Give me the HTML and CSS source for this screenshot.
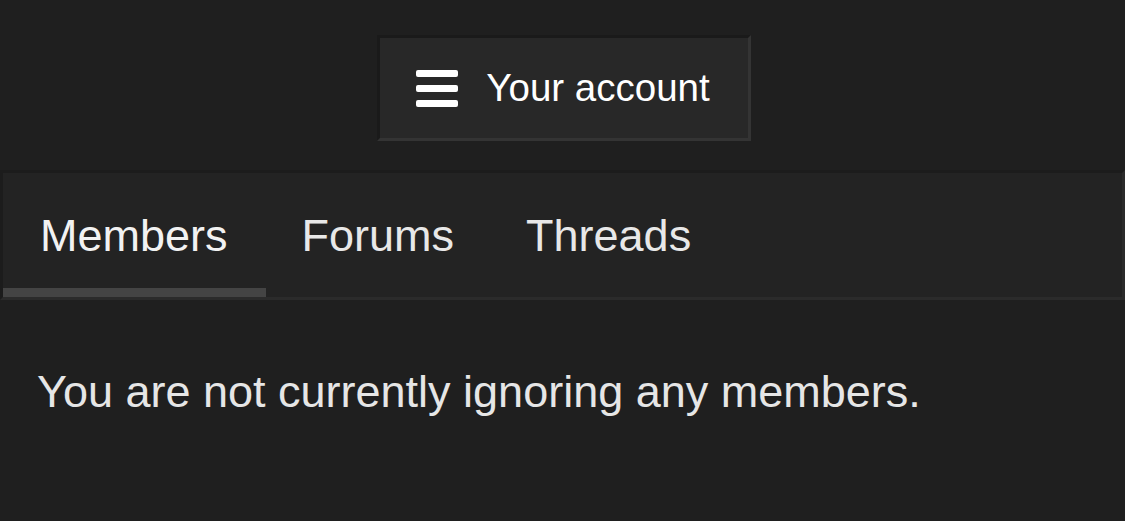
FILE: index.html
```html
<!DOCTYPE html>
<html lang="en">
  <head>
    <meta charset="UTF-8" />
    <meta name="viewport" content="width=device-width, initial-scale=1.0" />
    <title>Ignored members</title>
    <link rel="stylesheet" href="styles.css">
  </head>
  <body>
    <div class="account-bar">
      <button class="account-button">
        <svg class="menu-icon" width="42" height="37" viewBox="0 0 42 37">
          <rect x="0" y="0" width="42" height="7" rx="2" />
          <rect x="0" y="15" width="42" height="7" rx="2" />
          <rect x="0" y="30" width="42" height="7" rx="2" />
        </svg>
        <span>Your account</span>
      </button>
    </div>

    <div class="tabs">
      <a class="tab active" href="#">Members</a>
      <a class="tab" href="#">Forums</a>
      <a class="tab" href="#">Threads</a>
    </div>

    <p class="empty-message">You are not currently ignoring any members.</p>
  </body>
</html>
```

FILE: styles.css
```css
body {
  font-family: "Liberation Sans", Arial, sans-serif;
  margin: 0;
  padding: 0;
  background: #1f1f1f;
  color: #e8e8e8;
}

.account-bar {
  display: flex;
  justify-content: center;
  padding-top: 35px;
}

.account-button {
  display: flex;
  align-items: center;
  gap: 28px;
  margin-left: 3px;
  padding: 28px 38px 28px 36px;
  background: #282828;
  border: 3px solid;
  border-color: #1a1a1a #343434 #343434 #1a1a1a;
  color: #fff;
  font-family: inherit;
  font-size: 38.5px;
  line-height: 44px;
  cursor: pointer;
}

.menu-icon {
  fill: #fff;
  flex-shrink: 0;
}

.tabs {
  display: flex;
  margin-top: 29px;
  background: #232323;
  border: 3px solid;
  border-color: #1c1c1c #2b2b2b #2b2b2b #1c1c1c;
}

.tab {
  padding: 37px 36px 26px;
  border-bottom: 9px solid transparent;
  color: #e8e8e8;
  font-size: 45px;
  line-height: 52px;
  text-decoration: none;
}

.tab.active {
  padding-left: 37px;
  padding-right: 38px;
  border-bottom-color: #444;
  color: #f2f2f2;
}

.empty-message {
  margin: 66px 0 0;
  padding: 0 37px;
  font-size: 45px;
  line-height: 52px;
  color: #e6e6e6;
}
```
